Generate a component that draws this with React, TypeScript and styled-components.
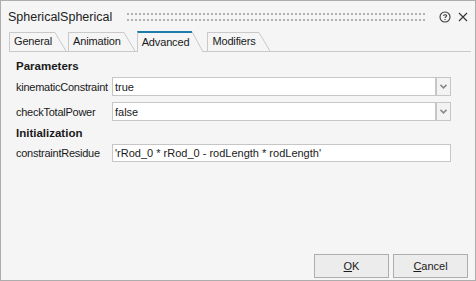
import styled, { createGlobalStyle } from "styled-components";

const Global = createGlobalStyle`
  html, body { margin: 0; padding: 0; background: #f5f5f5; }
  * { box-sizing: border-box; }
`

const FONT = `"Liberation Sans", Arial, sans-serif`
const LINE = '#c9c9c9'
const BG = '#f5f5f5'

const tabs = ['General', 'Animation', 'Advanced', 'Modifiers']

export default function App() {
    const activeTab = 'Advanced'

    return (
        <>
            <Global />
            <Window>
                <TitleBar>
                    <Title>SphericalSpherical</Title>
                    <Grip />
                    <TitleIcon aria-label="help">
                        <svg width="12" height="12" viewBox="0 0 12 12">
                            <circle cx="6" cy="6" r="5" fill="none" stroke="#3a3a3a" strokeWidth="1.1" />
                            <path d="M4.4 4.7 C4.4 3.5 7.6 3.3 7.6 4.8 C7.6 5.9 6 5.8 6 7.1" fill="none" stroke="#3a3a3a" strokeWidth="1.1" />
                            <rect x="5.5" y="8" width="1.1" height="1.1" fill="#3a3a3a" />
                        </svg>
                    </TitleIcon>
                    <TitleIcon aria-label="close">
                        <svg width="10" height="10" viewBox="0 0 10 10">
                            <path d="M1 1 L9 9 M9 1 L1 9" stroke="#333" strokeWidth="1.1" />
                        </svg>
                    </TitleIcon>
                </TitleBar>

                <TabStrip>
                    {tabs.map((name) => {
                        const active = name === activeTab
                        const h = active ? 21 : 19
                        return (
                            <Tab key={name} $active={active}>
                                <TabFace $active={active}>{name}</TabFace>
                                <svg width="11" height={h} viewBox={`0 0 11 ${h}`} style={{ display: 'block' }}>
                                    <polygon points={`0,0 11,${h} 0,${h}`} fill={BG} />
                                    <path d={`M0 0.5 L11 ${h}`} stroke={LINE} strokeWidth="1" fill="none" />
                                </svg>
                            </Tab>
                        )
                    })}
                </TabStrip>

                <Content>
                    <Section>Parameters</Section>
                    <Row>
                        <Label>kinematicConstraint</Label>
                        <Combo>
                            <Field>true</Field>
                            <DropButton><Chevron /></DropButton>
                        </Combo>
                    </Row>
                    <Row $gap>
                        <Label>checkTotalPower</Label>
                        <Combo>
                            <Field>false</Field>
                            <DropButton><Chevron /></DropButton>
                        </Combo>
                    </Row>
                    <Section $top={3}>Initialization</Section>
                    <Row>
                        <Label>constraintResidue</Label>
                        <Field $short>'rRod_0 * rRod_0 - rodLength * rodLength'</Field>
                    </Row>
                </Content>

                <Footer>
                    <Button><u>O</u>K</Button>
                    <Button><u>C</u>ancel</Button>
                </Footer>
            </Window>
        </>
    )
}

const Chevron = () => (
    <svg width="7" height="5" viewBox="0 0 7 5">
        <path d="M0.5 0.8 L3.5 3.8 L6.5 0.8" fill="none" stroke="#8a8a8a" strokeWidth="1.6" />
    </svg>
)

const Window = styled.div`
    width: 476px;
    height: 281px;
    border: 1px solid #adadad;
    background: ${BG};
    display: flex;
    flex-direction: column;
    font-family: ${FONT};
    color: #1a1a1a;
`

const TitleBar = styled.div`
    height: 30px;
    display: flex;
    align-items: center;
    padding: 1px 3px 0 7px;
`

const Title = styled.div`
    font-size: 12.5px;
    color: #222;
    white-space: nowrap;
`

const Grip = styled.div`
    flex: 1;
    height: 8px;
    margin: 1px 9px 0 15px;
    background:
        linear-gradient(to right, #b2b2b2 2px, transparent 2px) 0 0 / 4px 2px repeat-x,
        linear-gradient(to right, #b2b2b2 2px, transparent 2px) 0 6px / 4px 2px repeat-x;
`

const TitleIcon = styled.div`
    width: 18px;
    height: 14px;
    display: flex;
    align-items: center;
    justify-content: center;
`

const TabStrip = styled.div`
    height: 21px;
    margin: 0 4px 0 8px;
    display: flex;
    align-items: flex-end;
    gap: 2px;
    border-bottom: 1px solid ${LINE};
`

const Tab = styled.div<{ $active: boolean }>`
    display: flex;
    align-items: flex-start;
    position: relative;
    margin-bottom: ${p => p.$active ? '-1px' : '0'};
    margin-right: ${p => p.$active ? '2px' : '0'};
    z-index: ${p => p.$active ? 1 : 0};
`

const TabFace = styled.div<{ $active: boolean }>`
    height: ${p => p.$active ? '21px' : '19px'};
    padding: ${p => p.$active ? '2px 3px 0 4px' : '1px 3px 0 4px'};
    border-left: 1px solid ${LINE};
    border-top: ${p => p.$active ? '2px solid #1d7cab' : `1px solid ${LINE}`};
    background: ${BG};
    font-size: 11px;
    letter-spacing: -0.15px;
    line-height: 15px;
    white-space: nowrap;
`

const Content = styled.div`
    padding: 6px 24px 0 15px;
    display: flex;
    flex-direction: column;
`

const Section = styled.div<{ $top?: number }>`
    font-size: 11.5px;
    font-weight: 700;
    line-height: 16px;
    margin-top: ${p => p.$top ?? 0}px;
    margin-bottom: 3px;
`

const Row = styled.div<{ $gap?: boolean }>`
    display: flex;
    align-items: center;
    margin-top: ${p => p.$gap ? '5px' : '0'};
    margin-bottom: 1px;
`

const Label = styled.div`
    width: 96px;
    font-size: 11px;
    white-space: nowrap;
    letter-spacing: -0.25px;
`

const Combo = styled.div`
    flex: 1;
    display: flex;
    height: 19px;
`

const Field = styled.div<{ $short?: boolean }>`
    flex: 1;
    height: ${p => p.$short ? '18px' : '19px'};
    border: 1px solid #c6c6c6;
    background: #fff;
    font-size: 11px;
    line-height: ${p => p.$short ? '16px' : '18px'};
    padding-left: 2px;
    white-space: nowrap;
`

const DropButton = styled.div`
    width: 15px;
    height: 19px;
    border: 1px solid #c6c6c6;
    background: #f3f3f3;
    display: flex;
    align-items: center;
    justify-content: center;
`

const Footer = styled.div`
    margin-top: auto;
    display: flex;
    justify-content: flex-end;
    gap: 4px;
    padding: 0 7px 2px 0;
`

const Button = styled.div`
    width: 75px;
    height: 24px;
    border: 1px solid #adadad;
    background: #ececec;
    font-size: 11px;
    display: flex;
    align-items: center;
    justify-content: center;
`
